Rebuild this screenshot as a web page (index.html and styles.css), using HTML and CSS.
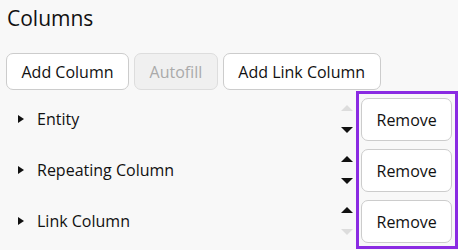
FILE: index.html
```html
<!DOCTYPE html>
<html lang="en">
<head>
    <meta charset="UTF-8">
    <title>Columns</title>
    <link rel="stylesheet" href="styles.css">
</head>
<body>
    <div class="panel">
        <h2>Columns</h2>

        <div class="toolbar">
            <button class="btn">Add Column</button>
            <button class="btn" disabled>Autofill</button>
            <button class="btn">Add Link Column</button>
        </div>

        <div class="columns">
            <div class="column-list">
                <div class="column-row">
                    <span class="caret"></span>
                    <span class="column-name">Entity</span>
                    <div class="order">
                        <span class="arrow up disabled"></span>
                        <span class="arrow down"></span>
                    </div>
                </div>
                <div class="column-row">
                    <span class="caret"></span>
                    <span class="column-name">Repeating Column</span>
                    <div class="order">
                        <span class="arrow up"></span>
                        <span class="arrow down"></span>
                    </div>
                </div>
                <div class="column-row">
                    <span class="caret"></span>
                    <span class="column-name">Link Column</span>
                    <div class="order">
                        <span class="arrow up"></span>
                        <span class="arrow down disabled"></span>
                    </div>
                </div>
            </div>

            <div class="remove-group">
                <button class="btn remove">Remove</button>
                <button class="btn remove">Remove</button>
                <button class="btn remove">Remove</button>
            </div>
        </div>
    </div>
</body>
</html>
```

FILE: styles.css
```css
* {
    margin: 0;
    padding: 0;
    box-sizing: border-box;
}

body {
    font-family: 'Open Sans', 'Noto Sans', sans-serif;
    background: #f8f8f8;
    color: #111;
}

.panel {
    padding: 4px 0 0 6px;
}

h2 {
    font-size: 21px;
    font-weight: 400;
    line-height: 28px;
    margin-left: 1px;
    margin-bottom: 21px;
}

.toolbar {
    display: flex;
    gap: 5px;
    margin-bottom: 1px;
}

.btn {
    font-family: inherit;
    font-size: 16px;
    color: #111;
    background: #fff;
    border: 1px solid #ccc;
    border-radius: 7px;
    height: 37px;
    padding: 0 14.5px;
}

.btn:disabled {
    background: #f0f0f0;
    color: #aaa;
    border-color: #ddd;
}

.columns {
    display: flex;
}

.column-list {
    flex: 1;
    padding-top: 2px;
}

.column-row {
    display: flex;
    align-items: center;
    height: 51px;
    padding-left: 12px;
}

.caret {
    width: 0;
    height: 0;
    border-top: 4.5px solid transparent;
    border-bottom: 4.5px solid transparent;
    border-left: 6px solid #111;
    margin-right: 13px;
}

.column-name {
    flex: 1;
    font-size: 16px;
}

.order {
    display: flex;
    flex-direction: column;
    justify-content: space-between;
    height: 28px;
    margin-right: 3px;
}

.arrow {
    width: 0;
    height: 0;
    border-left: 6.5px solid transparent;
    border-right: 6.5px solid transparent;
}

.arrow.up {
    border-bottom: 6px solid #111;
}

.arrow.down {
    border-top: 6px solid #111;
}

.arrow.up.disabled {
    border-bottom-color: #ddd;
}

.arrow.down.disabled {
    border-top-color: #ddd;
}

.remove-group {
    display: flex;
    flex-direction: column;
    gap: 8px;
    width: 102px;
    border: 3px solid #8a2be2;
    padding: 4px 3px 3px 2px;
}

.remove {
    width: 100%;
    height: 43px;
}
```
